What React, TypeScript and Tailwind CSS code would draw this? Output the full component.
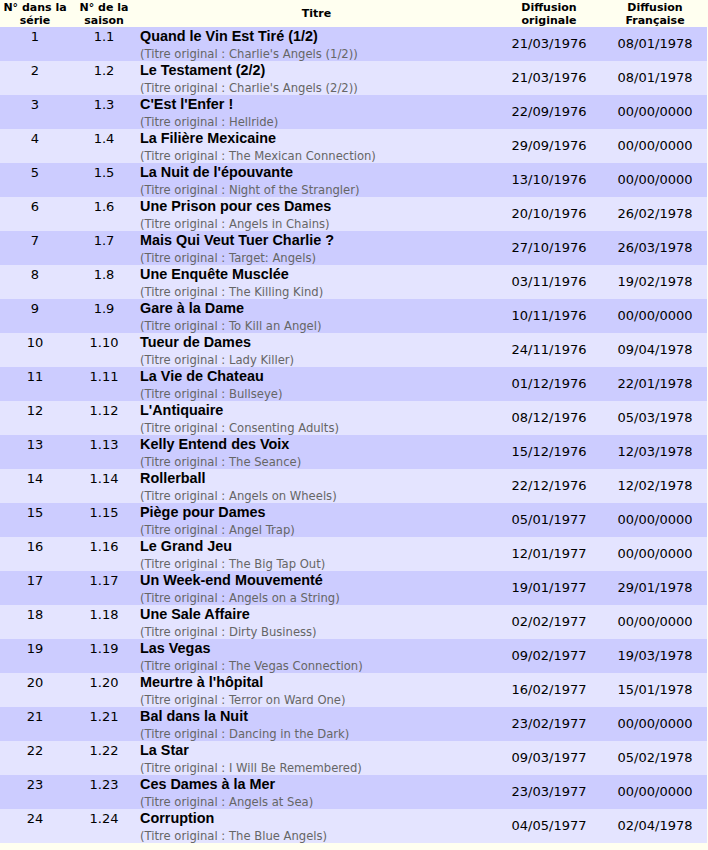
import React from "react";

interface Episode {
  num: number;
  season: string;
  title: string;
  original: string;
  aired: string;
  french: string;
}

const episodes: Episode[] = [
  { num: 1, season: "1.1", title: "Quand le Vin Est Tiré (1/2)", original: "Charlie's Angels (1/2)", aired: "21/03/1976", french: "08/01/1978" },
  { num: 2, season: "1.2", title: "Le Testament (2/2)", original: "Charlie's Angels (2/2)", aired: "21/03/1976", french: "08/01/1978" },
  { num: 3, season: "1.3", title: "C'Est l'Enfer !", original: "Hellride", aired: "22/09/1976", french: "00/00/0000" },
  { num: 4, season: "1.4", title: "La Filière Mexicaine", original: "The Mexican Connection", aired: "29/09/1976", french: "00/00/0000" },
  { num: 5, season: "1.5", title: "La Nuit de l'épouvante", original: "Night of the Strangler", aired: "13/10/1976", french: "00/00/0000" },
  { num: 6, season: "1.6", title: "Une Prison pour ces Dames", original: "Angels in Chains", aired: "20/10/1976", french: "26/02/1978" },
  { num: 7, season: "1.7", title: "Mais Qui Veut Tuer Charlie ?", original: "Target: Angels", aired: "27/10/1976", french: "26/03/1978" },
  { num: 8, season: "1.8", title: "Une Enquête Musclée", original: "The Killing Kind", aired: "03/11/1976", french: "19/02/1978" },
  { num: 9, season: "1.9", title: "Gare à la Dame", original: "To Kill an Angel", aired: "10/11/1976", french: "00/00/0000" },
  { num: 10, season: "1.10", title: "Tueur de Dames", original: "Lady Killer", aired: "24/11/1976", french: "09/04/1978" },
  { num: 11, season: "1.11", title: "La Vie de Chateau", original: "Bullseye", aired: "01/12/1976", french: "22/01/1978" },
  { num: 12, season: "1.12", title: "L'Antiquaire", original: "Consenting Adults", aired: "08/12/1976", french: "05/03/1978" },
  { num: 13, season: "1.13", title: "Kelly Entend des Voix", original: "The Seance", aired: "15/12/1976", french: "12/03/1978" },
  { num: 14, season: "1.14", title: "Rollerball", original: "Angels on Wheels", aired: "22/12/1976", french: "12/02/1978" },
  { num: 15, season: "1.15", title: "Piège pour Dames", original: "Angel Trap", aired: "05/01/1977", french: "00/00/0000" },
  { num: 16, season: "1.16", title: "Le Grand Jeu", original: "The Big Tap Out", aired: "12/01/1977", french: "00/00/0000" },
  { num: 17, season: "1.17", title: "Un Week-end Mouvementé", original: "Angels on a String", aired: "19/01/1977", french: "29/01/1978" },
  { num: 18, season: "1.18", title: "Une Sale Affaire", original: "Dirty Business", aired: "02/02/1977", french: "00/00/0000" },
  { num: 19, season: "1.19", title: "Las Vegas", original: "The Vegas Connection", aired: "09/02/1977", french: "19/03/1978" },
  { num: 20, season: "1.20", title: "Meurtre à l'hôpital", original: "Terror on Ward One", aired: "16/02/1977", french: "15/01/1978" },
  { num: 21, season: "1.21", title: "Bal dans la Nuit", original: "Dancing in the Dark", aired: "23/02/1977", french: "00/00/0000" },
  { num: 22, season: "1.22", title: "La Star", original: "I Will Be Remembered", aired: "09/03/1977", french: "05/02/1978" },
  { num: 23, season: "1.23", title: "Ces Dames à la Mer", original: "Angels at Sea", aired: "23/03/1977", french: "00/00/0000" },
  { num: 24, season: "1.24", title: "Corruption", original: "The Blue Angels", aired: "04/05/1977", french: "02/04/1978" },
];

export default function App() {
  return (
    <div className="min-h-screen bg-[#fffff0] font-['DejaVu_Sans',Verdana,sans-serif] text-black">
      <table className="w-[707px] border-collapse table-fixed">
        <colgroup>
          <col className="w-[70px]" />
          <col className="w-[68px]" />
          <col className="w-[357px]" />
          <col className="w-[108px]" />
          <col className="w-[104px]" />
        </colgroup>
        <thead>
          {/* en-tête */}
          <tr className="h-[27px] text-[11px] font-bold leading-[13px]">
            <th className="p-0 align-middle text-center">N° dans la<br />série</th>
            <th className="p-0 align-middle text-center">N° de la<br />saison</th>
            <th className="p-0 align-middle text-center">Titre</th>
            <th className="p-0 align-middle text-center">Diffusion<br />originale</th>
            <th className="p-0 align-middle text-center">Diffusion<br />Française</th>
          </tr>
        </thead>
        <tbody>
          {episodes.map((ep, i) => (
            <tr
              key={ep.num}
              className={`h-[34px] ${i % 2 === 0 ? "bg-[#ccccff]" : "bg-[#e4e4ff]"}`}
            >
              <td className="p-0 pt-[2px] align-top text-center text-[13px] leading-[16px]">{ep.num}</td>
              <td className="p-0 pt-[2px] align-top text-center text-[13px] leading-[16px]">{ep.season}</td>
              <td className="p-0 pl-[2px] pt-[1px] align-top">
                <div className="font-['Liberation_Sans',Arial,sans-serif] font-bold text-[14.4px] leading-[17px]">
                  {ep.title}
                </div>
                <div className="pt-[2px] text-[11.6px] leading-[14px] text-[#666666]">
                  (Titre original : {ep.original})
                </div>
              </td>
              <td className="p-0 align-middle text-center text-[13px]">{ep.aired}</td>
              <td className="p-0 align-middle text-center text-[13px]">{ep.french}</td>
            </tr>
          ))}
        </tbody>
      </table>
    </div>
  );
}
